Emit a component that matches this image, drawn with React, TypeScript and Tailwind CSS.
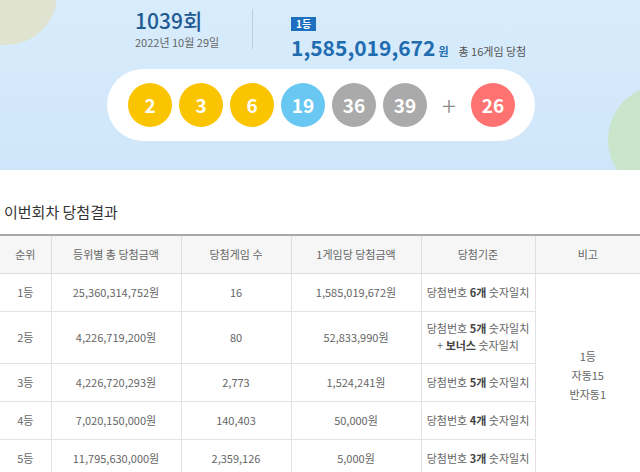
const font = { fontFamily: '"Noto Sans CJK KR", "Noto Sans", sans-serif' };

const balls = [
  { n: 2, c: "bg-[#fbc400]" },
  { n: 3, c: "bg-[#fbc400]" },
  { n: 6, c: "bg-[#fbc400]" },
  { n: 19, c: "bg-[#69c8f2]" },
  { n: 36, c: "bg-[#aaaaaa]" },
  { n: 39, c: "bg-[#aaaaaa]" },
];

const rows = [
  { rank: "1등", total: "25,360,314,752원", games: "16", per: "1,585,019,672원", k: "6", bonus: false },
  { rank: "2등", total: "4,226,719,200원", games: "80", per: "52,833,990원", k: "5", bonus: true },
  { rank: "3등", total: "4,226,720,293원", games: "2,773", per: "1,524,241원", k: "5", bonus: false },
  { rank: "4등", total: "7,020,150,000원", games: "140,403", per: "50,000원", k: "4", bonus: false },
  { rank: "5등", total: "11,795,630,000원", games: "2,359,126", per: "5,000원", k: "3", bonus: false },
];

function Ball({ n, c }: { n: number; c: string }) {
  return (
    <div className={`w-[44px] h-[44px] rounded-full ${c} flex items-center justify-center text-white text-[19px] font-bold`}>
      {n}
    </div>
  );
}

export default function App() {
  return (
    <div className="w-[640px] h-[472px] overflow-hidden bg-white" style={font}>
      {/* Hero */}
      <div className="relative h-[170px] bg-gradient-to-b from-[#d8ecfb] to-[#cfe6fa] overflow-hidden">
        <div className="absolute -left-[45px] -top-[60px] w-[102px] h-[105px] rounded-full bg-[#dfe3cf]" />
        <div className="absolute left-[608px] top-[85px] w-[110px] h-[110px] rounded-full bg-[#c9e5cc]" />
        <div className="relative flex pt-[6px]">
          <div className="w-[252px] pl-[135px]">
            <div className="text-[21px] leading-[28px] text-[#1f5a93] font-medium">1039<span>회</span></div>
            <div className="text-[11px] text-[#666] leading-[14px] mt-[1px]">2022년 10월 29일</div>
          </div>
          <div className="w-px h-[40px] bg-[#b9cfe0] mt-[3px]" />
          <div className="pl-[38px] pt-[3px]">
            <div className="inline-block bg-[#1d6fc0] text-white text-[10px] leading-[14px] px-[5px] font-bold">1등</div>
            <div className="flex items-baseline mt-[1px]">
              <span className="text-[21px] leading-[26px] font-bold text-[#1f6cb0]">1,585,019,672</span>
              <span className="text-[11px] font-bold text-[#1f6cb0] ml-[3px]">원</span>
              <span className="text-[11px] text-[#555] ml-[10px]">총 16게임 당첨</span>
            </div>
          </div>
        </div>
        <div className="relative ml-[107px] mt-[9px] w-[428px] h-[72px] rounded-full bg-white flex items-center pl-[21px] gap-[7px]">
          {balls.map((b) => (
            <Ball key={b.n} {...b} />
          ))}
          <div className="w-[30px] text-center text-[26px] text-[#888] leading-none font-light">+</div>
          <Ball n={26} c="bg-[#ff7272]" />
        </div>
      </div>

      <div className="h-[30px]" />
      <h2 className="text-[15px] text-[#333] pl-[4px] leading-[24px]">이번회차 당첨결과</h2>

      <table className="mt-[10px] w-[640px] border-collapse text-[11px] text-[#666] text-center table-fixed border-t-2 border-[#a8a8a8]">
        <colgroup>
          <col className="w-[51px]" />
          <col className="w-[130px]" />
          <col className="w-[110px]" />
          <col className="w-[130px]" />
          <col className="w-[114px]" />
          <col />
        </colgroup>
        <thead>
          <tr className="bg-[#f6f6f6] h-[38px]">
            {["순위", "등위별 총 당첨금액", "당첨게임 수", "1게임당 당첨금액", "당첨기준", "비고"].map((h, i) => (
              <th key={h} className={`font-normal border-b border-[#ddd] ${i > 0 ? "border-l" : ""}`}>{h}</th>
            ))}
          </tr>
        </thead>
        <tbody>
          {rows.map((r, i) => (
            <tr key={r.rank} className={r.bonus ? "h-[52px]" : "h-[38px]"}>
              <td className="border-b border-[#e2e2e2]">{r.rank}</td>
              <td className="border-b border-l border-[#e2e2e2]">{r.total}</td>
              <td className="border-b border-l border-[#e2e2e2]">{r.games}</td>
              <td className="border-b border-l border-[#e2e2e2]">{r.per}</td>
              <td className="border-b border-l border-[#e2e2e2] leading-[17px]">
                당첨번호 <b className="text-[#444]">{r.k}개</b> 숫자일치
                {r.bonus && (
                  <>
                    <br />+ <b className="text-[#444]">보너스</b> 숫자일치
                  </>
                )}
              </td>
              {i === 0 && (
                <td rowSpan={5} className="border-l border-[#e2e2e2] leading-[19px]">
                  1등<br />자동15<br />반자동1
                </td>
              )}
            </tr>
          ))}
        </tbody>
      </table>
    </div>
  );
}
